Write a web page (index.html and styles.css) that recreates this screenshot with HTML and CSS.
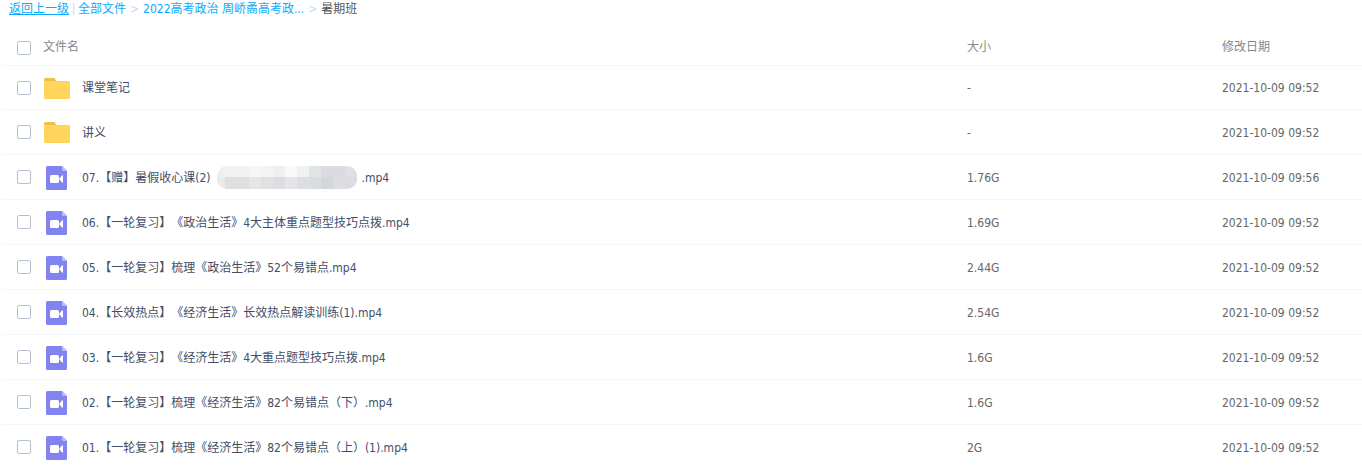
FILE: index.html
```
<!DOCTYPE html>
<html lang="zh-CN">
<head>
    <meta charset="UTF-8">
    <meta name="viewport" content="width=device-width, initial-scale=1.0">
    <title>暑期班</title>
    <link rel="stylesheet" href="styles.css">
</head>
<body>
    <svg class="sprite" aria-hidden="true">
        <symbol id="icon-folder" viewBox="0 0 26 21">
            <path fill="#eebe4b" d="M0 8V1.5Q0 0 1.5 0H9.500Q10.500 0 11 .8L12.300 3V8Z"/>
            <path fill="#ffd65b" d="M0 3H24.500Q26 3 26 4.500V19.500Q26 21 24.500 21H1.500Q0 21 0 19.500Z"/>
        </symbol>
        <symbol id="icon-video" viewBox="0 0 21 24">
            <path fill="#8183f1" d="M1.500 0H16L21 5V22.500Q21 24 19.500 24H1.500Q0 24 0 22.500V1.500Q0 0 1.500 0Z"/>
            <path fill="#b9baf8" d="M16 0L21 5H17Q16 5 16 4Z"/>
            <rect fill="#fff" x="4" y="9" width="9" height="8" rx="1.500"/>
            <path fill="#fff" d="M13.500 12.500L16 9.500Q17 9 17 10V16Q17 17 16 16.500L13.500 13.500Z"/>
        </symbol>
    </svg>

    <nav class="breadcrumb">
        <a class="back" href="#">返回上一级</a>
        <span class="divider">|</span>
        <a href="#">全部文件</a>
        <span class="arrow">&gt;</span>
        <a href="#">2022高考政治 周峤矞高考政...</a>
        <span class="arrow">&gt;</span>
        <span class="current">暑期班</span>
    </nav>

    <table class="file-list">
        <thead>
            <tr>
                <th class="col-check"><input type="checkbox" aria-label="全选"></th>
                <th class="col-name">文件名</th>
                <th class="col-size">大小</th>
                <th class="col-date">修改日期</th>
            </tr>
        </thead>
        <tbody>
            <tr>
                <td class="col-check"><input type="checkbox" id="f1"></td>
                <td><label class="file" for="f1"><svg class="icon folder"><use href="#icon-folder"/></svg>课堂笔记</label></td>
                <td>-</td>
                <td>2021-10-09 09:52</td>
            </tr>
            <tr>
                <td class="col-check"><input type="checkbox" id="f2"></td>
                <td><label class="file" for="f2"><svg class="icon folder"><use href="#icon-folder"/></svg>讲义</label></td>
                <td>-</td>
                <td>2021-10-09 09:52</td>
            </tr>
            <tr>
                <td class="col-check"><input type="checkbox" id="f3"></td>
                <td>
                    <label class="file" for="f3">
                        <svg class="icon video"><use href="#icon-video"/></svg>07.【赠】暑假收心课(2)
                        <svg class="mosaic" viewBox="0 0 140 23" shape-rendering="crispEdges" aria-hidden="true">
                            <rect fill="#eeeff1" width="140" height="23"/>
                            <rect fill="#f0f1f2" x="8" width="24" height="11"/>
                            <rect fill="#f6f6f7" x="32" width="12" height="11"/>
                            <rect fill="#f2f3f4" x="44" width="12" height="11"/>
                            <rect fill="#eeeff1" x="56" width="12" height="11"/>
                            <rect fill="#f8f9f9" x="68" width="12" height="11"/>
                            <rect fill="#f0f1f1" x="80" width="12" height="11"/>
                            <rect fill="#e1e4e7" x="92" width="12" height="11"/>
                            <rect fill="#dadbe0" x="104" width="24" height="11"/>
                            <rect fill="#dfe0e4" x="128" width="12" height="11"/>
                            <rect fill="#e8eaeb" y="11" width="8" height="12"/>
                            <rect fill="#dfdfe2" x="8" y="11" width="24" height="12"/>
                            <rect fill="#e6e6e8" x="32" y="11" width="12" height="12"/>
                            <rect fill="#e1e1e4" x="44" y="11" width="12" height="12"/>
                            <rect fill="#dcdde0" x="56" y="11" width="12" height="12"/>
                            <rect fill="#e5e5e7" x="68" y="11" width="12" height="12"/>
                            <rect fill="#dddee2" x="80" y="11" width="12" height="12"/>
                            <rect fill="#d8dde0" x="92" y="11" width="12" height="12"/>
                            <rect fill="#d5d6dc" x="104" y="11" width="12" height="12"/>
                            <rect fill="#dcdde2" x="116" y="11" width="24" height="12"/>
                        </svg>
                        .mp4
                    </label>
                </td>
                <td>1.76G</td>
                <td>2021-10-09 09:56</td>
            </tr>
            <tr>
                <td class="col-check"><input type="checkbox" id="f4"></td>
                <td><label class="file" for="f4"><svg class="icon video"><use href="#icon-video"/></svg>06.【一轮复习】《政治生活》4大主体重点题型技巧点拨.mp4</label></td>
                <td>1.69G</td>
                <td>2021-10-09 09:52</td>
            </tr>
            <tr>
                <td class="col-check"><input type="checkbox" id="f5"></td>
                <td><label class="file" for="f5"><svg class="icon video"><use href="#icon-video"/></svg>05.【一轮复习】梳理《政治生活》52个易错点.mp4</label></td>
                <td>2.44G</td>
                <td>2021-10-09 09:52</td>
            </tr>
            <tr>
                <td class="col-check"><input type="checkbox" id="f6"></td>
                <td><label class="file" for="f6"><svg class="icon video"><use href="#icon-video"/></svg>04.【长效热点】《经济生活》长效热点解读训练(1).mp4</label></td>
                <td>2.54G</td>
                <td>2021-10-09 09:52</td>
            </tr>
            <tr>
                <td class="col-check"><input type="checkbox" id="f7"></td>
                <td><label class="file" for="f7"><svg class="icon video"><use href="#icon-video"/></svg>03.【一轮复习】《经济生活》4大重点题型技巧点拨.mp4</label></td>
                <td>1.6G</td>
                <td>2021-10-09 09:52</td>
            </tr>
            <tr>
                <td class="col-check"><input type="checkbox" id="f8"></td>
                <td><label class="file" for="f8"><svg class="icon video"><use href="#icon-video"/></svg>02.【一轮复习】梳理《经济生活》82个易错点（下）.mp4</label></td>
                <td>1.6G</td>
                <td>2021-10-09 09:52</td>
            </tr>
            <tr>
                <td class="col-check"><input type="checkbox" id="f9"></td>
                <td><label class="file" for="f9"><svg class="icon video"><use href="#icon-video"/></svg>01.【一轮复习】梳理《经济生活》82个易错点（上）(1).mp4</label></td>
                <td>2G</td>
                <td>2021-10-09 09:52</td>
            </tr>
        </tbody>
    </table>
</body>
</html>
```
FILE: styles.css
```
body {
    margin: 0;
    background-color: #fff;
    color: #666;
    font-family: "DejaVu Sans Condensed", "Noto Sans CJK SC", sans-serif;
    font-size: 12px;
    line-height: 18px;
    text-spacing-trim: space-all;
}

.sprite {
    display: none;
}

.breadcrumb {
    display: flex;
    padding: 0 9px;
    height: 28px;
    white-space: nowrap;
}

.breadcrumb a {
    color: #09aaff;
    text-decoration: none;
}

.breadcrumb .back {
    text-decoration: underline;
}

.divider {
    width: 9px;
    text-align: center;
    color: #c4dbfe;
}

.arrow {
    width: 17px;
    text-align: center;
    color: #c4dbfe;
}

.current {
    color: #555;
}

.file-list {
    width: 100%;
    padding-left: 1px;
    border-spacing: 0;
    table-layout: fixed;
}

.file-list th,
.file-list td {
    box-sizing: border-box;
    height: 45px;
    padding: 0;
    border-bottom: 1px solid #f2f6fd;
    text-align: left;
    font-weight: normal;
    vertical-align: middle;
    white-space: nowrap;
}

.file-list td {
    padding-top: 1px;
}

.file-list th {
    height: 38px;
    color: #888;
}

.file-list tbody tr:first-child td {
    height: 44px;
}

.file-list .col-check {
    width: 42px;
    padding-left: 16px;
}

.file-list th.col-check {
    padding-top: 2px;
}

.file-list td.col-check {
    padding-top: 0;
}

.col-size {
    width: 255px;
}

.col-date {
    width: 140px;
}

.file-list input {
    display: block;
    appearance: none;
    box-sizing: border-box;
    width: 14px;
    height: 14px;
    margin: 0;
    border: 1px solid #b4c0d0;
    border-radius: 2px;
    background-color: #fff;
    cursor: pointer;
}

.file-list input:checked {
    border-color: #09aaff;
    background-color: #09aaff;
}

.file {
    display: flex;
    align-items: center;
    color: #424e67;
    cursor: pointer;
}

.icon {
    flex: none;
}

.folder {
    width: 26px;
    height: 21px;
    margin: 0 12px 0 1px;
}

.video {
    width: 21px;
    height: 24px;
    margin: 0 15px 0 3px;
}

.mosaic {
    width: 140px;
    height: 23px;
    margin: 0 4px 0 7px;
    border-radius: 10px;
}
```
